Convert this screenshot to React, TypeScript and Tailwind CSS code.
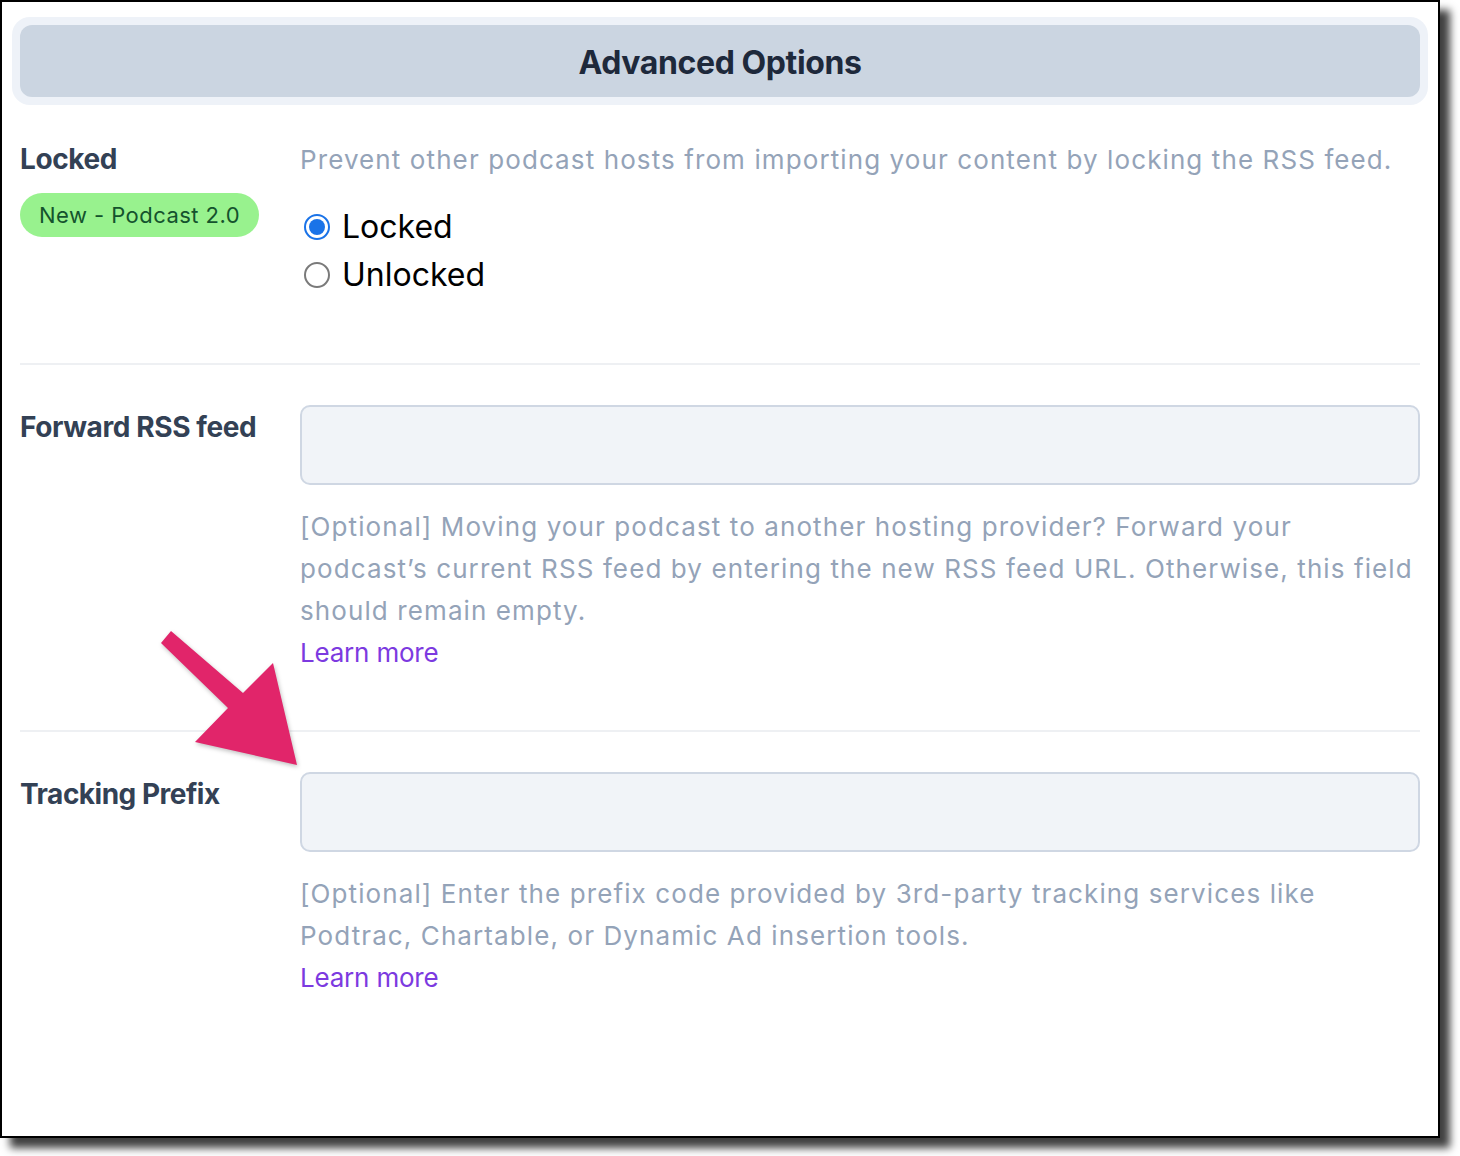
import React from "react";

function Radio({ checked, label }: { checked: boolean; label: string }) {
  return (
    <div className="flex items-center h-[48px]">
      <div className="w-[34px] flex justify-start pl-[4px]">
        {checked ? (
          <div className="w-[26px] h-[26px] rounded-full border-[2px] border-[#1a73e8] flex items-center justify-center bg-white">
            <div className="w-[16px] h-[16px] rounded-full bg-[#1a73e8]" />
          </div>
        ) : (
          <div className="w-[26px] h-[26px] rounded-full border-[2px] border-[#7a7a7a] bg-white" />
        )}
      </div>
      <span className="ml-[8px] text-[32px] text-black leading-[48px]">{label}</span>
    </div>
  );
}

export default function App() {
  return (
    <div
      className="w-[1460px] h-[1156px] bg-white relative"
      style={{ fontFamily: "Inter, 'Noto Sans', sans-serif" }}
    >
      <div className="w-[1440px] h-[1138px] border-2 border-black bg-white shadow-[10px_10px_8px_rgba(0,0,0,0.75)] relative">
        <div className="pt-[15px] px-[10px]">
          <div className="bg-[#eef2f8] rounded-[18px] p-[8px]">
            <div className="bg-[#cbd5e1] rounded-[12px] h-[72px] flex items-center justify-center pt-[4px]">
              <h1 className="text-[32px] font-bold text-[#1e293b] tracking-[-0.4px]">Advanced Options</h1>
            </div>
          </div>
        </div>

        <div className="px-[18px]">
          {/* Locked row */}
          <div className="flex pt-[34px] pb-[64px] border-b-2 border-[#eef0f3]">
            <div className="w-[280px] shrink-0">
              <div className="text-[28px] font-bold text-[#334155] leading-[40px] tracking-[-0.4px]">Locked</div>
              <div className="mt-[14px] inline-flex items-center h-[44px] px-[19px] rounded-full bg-[#98f28e] text-[22px] tracking-[0.45px] text-[#14532d]">
                New - Podcast 2.0
              </div>
            </div>
            <div className="flex-1">
              <p className="text-[26px] leading-[42px] text-[#94a3b8] tracking-[1.1px] whitespace-nowrap">
                Prevent other podcast hosts from importing your content by locking the RSS feed.
              </p>
              <div className="mt-[22px]">
                <Radio checked label="Locked" />
                <Radio checked={false} label="Unlocked" />
              </div>
            </div>
          </div>

          {/* Forward RSS row */}
          <div className="flex pt-[40px] pb-[56px] border-b-2 border-[#eef0f3]">
            <div className="w-[280px] shrink-0 pt-[2px]">
              <div className="text-[28px] font-bold text-[#334155] leading-[40px] tracking-[-0.4px] whitespace-nowrap">Forward RSS feed</div>
            </div>
            <div className="flex-1">
              <div className="h-[80px] rounded-[10px] border-2 border-[#cfd7e3] bg-[#f1f4f8]" />
              <p className="mt-[21px] text-[26px] leading-[42px] text-[#94a3b8] tracking-[1.1px] whitespace-nowrap">
                [Optional] Moving your podcast to another hosting provider? Forward your
                <br />
                podcast’s current RSS feed by entering the new RSS feed URL. Otherwise, this field
                <br />
                should remain empty.
              </p>
              <a className="block text-[26px] leading-[42px] text-[#7c3ae0] tracking-[-0.2px]">Learn more</a>
            </div>
          </div>

          {/* Tracking prefix row */}
          <div className="flex pt-[40px]">
            <div className="w-[280px] shrink-0 pt-[2px]">
              <div className="text-[28px] font-bold text-[#334155] leading-[40px] tracking-[-0.5px] whitespace-nowrap">Tracking Prefix</div>
            </div>
            <div className="flex-1">
              <div className="h-[80px] rounded-[10px] border-2 border-[#cfd7e3] bg-[#f1f4f8]" />
              <p className="mt-[21px] text-[26px] leading-[42px] text-[#94a3b8] tracking-[1.1px] whitespace-nowrap">
                [Optional] Enter the prefix code provided by 3rd-party tracking services like
                <br />
                Podtrac, Chartable, or Dynamic Ad insertion tools.
              </p>
              <a className="block text-[26px] leading-[42px] text-[#7c3ae0] tracking-[-0.2px]">Learn more</a>
            </div>
          </div>
        </div>
      </div>

      <svg
        className="absolute left-0 top-0 pointer-events-none"
        width="1460"
        height="1156"
        viewBox="0 0 1460 1156"
        style={{ filter: "drop-shadow(1px 2px 2px rgba(0,0,0,0.25))" }}
      >
        <polygon
          points="171,631 243,693 273,663 297,765 195,742 228,708 161,643"
          fill="#e1256a"
        />
      </svg>
    </div>
  );
}
